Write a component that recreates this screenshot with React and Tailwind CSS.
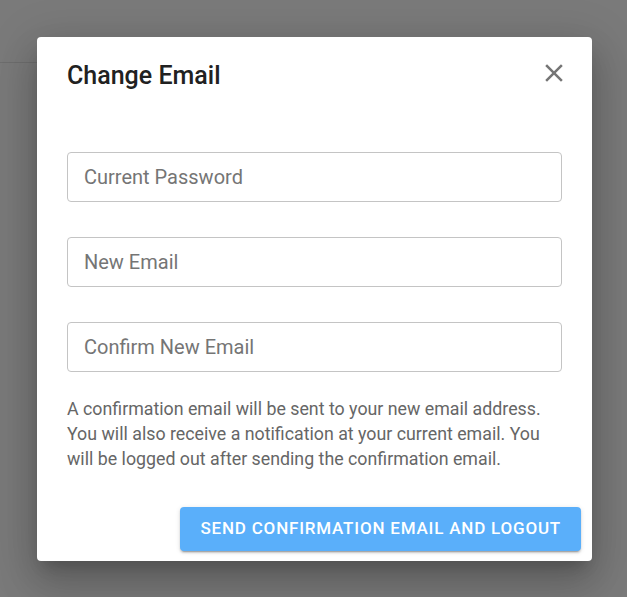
import React from 'react';

const CloseIcon = () => (
  <svg viewBox="0 0 24 24" className="w-[30px] h-[30px]" fill="#757575">
    <path d="M19 6.41 17.59 5 12 10.59 6.41 5 5 6.41 10.59 12 5 17.59 6.41 19 12 13.41 17.59 19 19 17.59 13.41 12z" />
  </svg>
);

const Field = ({ placeholder }) => (
  <input
    type="text"
    placeholder={placeholder}
    className="w-full h-[50px] rounded border border-[#c4c4c4] bg-white px-4 text-[20px] text-[#212121] placeholder:text-[#757575] outline-none"
  />
);

export default function App() {
  return (
    <div
      className="relative h-[597px] w-[627px] overflow-hidden bg-[#7a7a7a]"
      style={{ fontFamily: 'Roboto, "Liberation Sans", sans-serif' }}
    >
      {/* page header edge behind the backdrop */}
      <div className="h-[63px] w-[300px] border-b border-[#6e6e6e]" />

      {/* Dialog */}
      <div className="absolute left-[37px] top-[37px] w-[555px] h-[524px] rounded bg-white shadow-[0_11px_15px_-7px_rgba(0,0,0,0.2),0_24px_38px_3px_rgba(0,0,0,0.14),0_9px_46px_8px_rgba(0,0,0,0.12)] flex flex-col">
        <div className="flex items-start justify-between pl-[30px] pr-[23px] pt-[21px]">
          <h2 className="pt-[3px] text-[25px] font-medium leading-[30px] text-[#212121]">Change Email</h2>
          <button className="flex">
            <CloseIcon />
          </button>
        </div>

        <div className="flex flex-col gap-[35px] px-[30px] pt-[61px]">
          <Field placeholder="Current Password" />
          <Field placeholder="New Email" />
          <Field placeholder="Confirm New Email" />
        </div>

        <p className="px-[30px] pt-[24px] text-[17.8px] leading-[25px] text-[#666666]">
          A confirmation email will be sent to your new email address. You will also receive a notification at your current email. You will be logged out after sending the confirmation email.
        </p>

        <div className="mt-auto flex justify-end pr-[11px] pb-[10px]">
          <button className="h-[44px] rounded bg-[#5aaffa] px-5 text-[17px] font-medium uppercase tracking-[0.8px] text-white shadow-[0_3px_1px_-2px_rgba(0,0,0,0.2),0_2px_2px_0_rgba(0,0,0,0.14),0_1px_5px_0_rgba(0,0,0,0.12)]">
            Send confirmation email and logout
          </button>
        </div>
      </div>
    </div>
  );
}
